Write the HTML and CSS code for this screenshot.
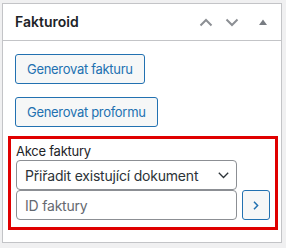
FILE: index.html
```html
<!DOCTYPE html>
<html lang="cs">
<head>
<meta charset="utf-8">
<title>Fakturoid</title>
<link rel="stylesheet" href="styles.css">
</head>
<body>
<div class="postbox">
  <div class="postbox-header">
    <h2 class="title">Fakturoid</h2>
    <div class="handle-actions">
      <button class="handle handle-sm" type="button" aria-label="Posunout nahoru">
        <svg width="14" height="9" viewBox="0 0 14 9"><path d="M1.5 7.5 L7 2 L12.5 7.5" fill="none" stroke="#8c8f94" stroke-width="2"/></svg>
      </button>
      <button class="handle handle-sm" type="button" aria-label="Posunout dolů">
        <svg width="14" height="9" viewBox="0 0 14 9"><path d="M1.5 1.5 L7 7 L12.5 1.5" fill="none" stroke="#8c8f94" stroke-width="2"/></svg>
      </button>
      <button class="handle handle-lg" type="button" aria-label="Sbalit">
        <svg width="8" height="6" viewBox="0 0 8 6"><path d="M0 6 L4 0.5 L8 6 Z" fill="#787c82"/></svg>
      </button>
    </div>
  </div>
  <div class="inside">
    <div class="btn-row"><button class="button" type="button">Generovat fakturu</button></div>
    <div class="btn-row"><button class="button" type="button">Generovat proformu</button></div>
    <div class="action-box">
      <label class="action-label" for="akce">Akce faktury</label>
      <div class="action-grid">
        <div class="select-wrap">
          <select id="akce" class="select">
            <option>Přiřadit existující dokument</option>
          </select>
          <svg class="select-chevron" width="11" height="7" viewBox="0 0 11 7"><path d="M0.8 0.8 L5.5 5.5 L10.2 0.8" fill="none" stroke="#2c3338" stroke-width="1.3"/></svg>
        </div>
        <span></span>
        <input class="text-input" type="text" placeholder="ID faktury">
        <button class="button go" type="button" aria-label="Provést">
          <svg width="6" height="9" viewBox="0 0 6 9"><path d="M1 0.8 L4.6 4.5 L1 8.2" fill="none" stroke="#2271b1" stroke-width="1.5"/></svg>
        </button>
      </div>
    </div>
  </div>
</div>
</body>
</html>
```

FILE: styles.css
```css
html, body {
  margin: 0;
  padding: 0;
}
body {
  background: #f0f0f1;
  font-family: Inter, "Liberation Sans", sans-serif;
  color: #1d2327;
  padding: 3px 0 0 2px;
}
.postbox {
  box-sizing: border-box;
  width: 280px;
  background: #fff;
  border: 1px solid #c3c4c7;
}
.postbox-header {
  display: flex;
  align-items: center;
  justify-content: space-between;
  height: 36px;
  border-bottom: 1px solid #c3c4c7;
}
.title {
  margin: 0;
  padding: 0 12px;
  font-size: 14px;
  line-height: 1.4;
  font-weight: 600;
  color: #1d2327;
}
.handle-actions {
  display: flex;
  height: 36px;
}
.handle {
  display: flex;
  align-items: center;
  justify-content: center;
  height: 36px;
  padding: 0;
  border: 0;
  background: transparent;
}
.handle-sm { width: 26px; }
.handle-lg { width: 36px; }
.inside {
  padding: 0 12px 12px;
  letter-spacing: -0.25px;
}
.btn-row {
  margin-top: 13px;
  display: flex;
}
.button {
  box-sizing: border-box;
  height: 30px;
  padding: 0 11px;
  font-family: inherit;
  font-size: 13px;
  line-height: 28px;
  letter-spacing: -0.3px;
  color: #2271b1;
  background: #f6f7f7;
  border: 1px solid #2271b1;
  border-radius: 3px;
}
.action-box {
  margin: 9px -9px 0 -7px;
  border: 3px solid #e00000;
  padding: 3px 5px 7px;
}
.action-label {
  display: block;
  font-size: 13px;
  line-height: 18px;
  color: #1d2327;
}
.action-grid {
  display: grid;
  grid-template-columns: 1fr 28px;
  column-gap: 5px;
}
.select-wrap {
  position: relative;
}
.select {
  box-sizing: border-box;
  width: 100%;
  height: 30px;
  appearance: none;
  -webkit-appearance: none;
  padding: 0 24px 0 8px;
  font-family: inherit;
  font-size: 14px;
  letter-spacing: -0.2px;
  color: #2c3338;
  background: #fff;
  border: 1px solid #8c8f94;
  border-radius: 4px;
}
.select-chevron {
  position: absolute;
  right: 8px;
  top: 12px;
}
.text-input {
  box-sizing: border-box;
  width: 100%;
  height: 30px;
  padding: 0 8px;
  font-family: inherit;
  font-size: 14px;
  letter-spacing: -0.2px;
  color: #2c3338;
  background: #fff;
  border: 1px solid #8c8f94;
  border-radius: 4px;
}
.text-input::placeholder {
  color: #646970;
}
.go {
  width: 28px;
  padding: 0;
  display: flex;
  align-items: center;
  justify-content: center;
}
```
